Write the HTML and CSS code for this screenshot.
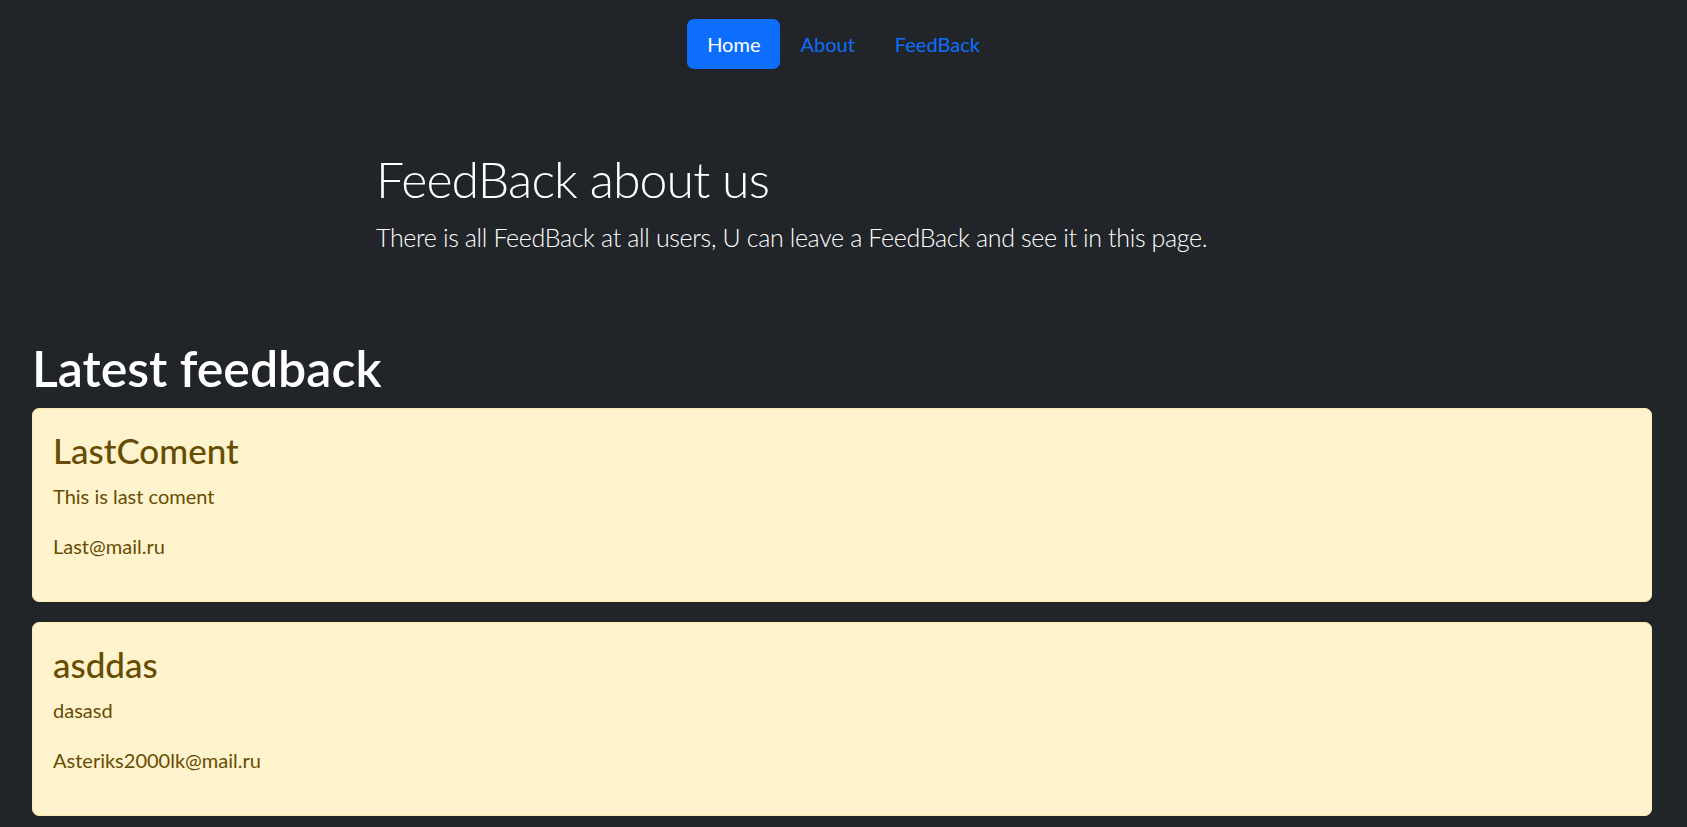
FILE: index.html
```html
<!DOCTYPE html>
<html lang="en">
<head>
<meta charset="utf-8">
<title>FeedBack</title>
<link rel="stylesheet" href="styles.css">
</head>
<body>
<header class="site-header">
  <ul class="nav">
    <li><a class="nav-link active" href="#">Home</a></li>
    <li><a class="nav-link" href="#">About</a></li>
    <li><a class="nav-link" href="#">FeedBack</a></li>
  </ul>
</header>
<section class="hero">
  <h1 class="hero-title">FeedBack about us</h1>
  <p class="hero-lead">There is all FeedBack at all users, U can leave a FeedBack and see it in this page.</p>
</section>
<main class="feed">
  <h1 class="feed-title">Latest feedback</h1>
  <div class="alert">
    <h3 class="alert-heading">LastComent</h3>
    <p>This is last coment</p>
    <p>Last@mail.ru</p>
  </div>
  <div class="alert">
    <h3 class="alert-heading">asddas</h3>
    <p>dasasd</p>
    <p>Asteriks2000lk@mail.ru</p>
  </div>
</main>
</body>
</html>
```
FILE: styles.css
```css
html, body {
  margin: 0;
  padding: 0;
  overflow: hidden;
}
body {
  background: #212529;
  color: #fff;
  font-family: Lato, "Open Sans", sans-serif;
  font-size: 20px;
  line-height: 1.5;
}
.site-header {
  display: flex;
  justify-content: center;
  padding: 19px 0 20px;
}
.nav {
  display: flex;
  list-style: none;
  margin: 0;
  padding: 0;
}
.nav-link {
  display: block;
  padding: 10px 20px;
  font-size: 20px;
  line-height: 30px;
  color: #0d6efd;
  text-decoration: none;
  border-radius: 7px;
}
.nav-link.active {
  background: #0d6efd;
  color: #fff;
}
.hero {
  padding: 60px 0 61px 376px;
}
.hero-title {
  margin: 0 0 10px;
  font-size: 50px;
  font-weight: 300;
  line-height: 1.2;
  letter-spacing: -0.9px;
}
.hero-lead {
  margin: 0 0 20px;
  font-size: 25px;
  font-weight: 300;
  line-height: 1.5;
  letter-spacing: -0.35px;
}
.feed {
  padding: 0 35px 0 32px;
}
.feed-title {
  margin: 0 0 10px;
  font-size: 50px;
  font-weight: 600;
  line-height: 1.2;
}
.alert {
  background: #fff3cd;
  border: 1px solid #ffecb5;
  color: #664d03;
  border-radius: 7px;
  padding: 20px;
  margin-bottom: 20px;
}
.alert-heading {
  margin: 0 0 10px;
  font-size: 35px;
  font-weight: 500;
  line-height: 1.2;
}
.alert p {
  margin: 0 0 20px;
}
```
